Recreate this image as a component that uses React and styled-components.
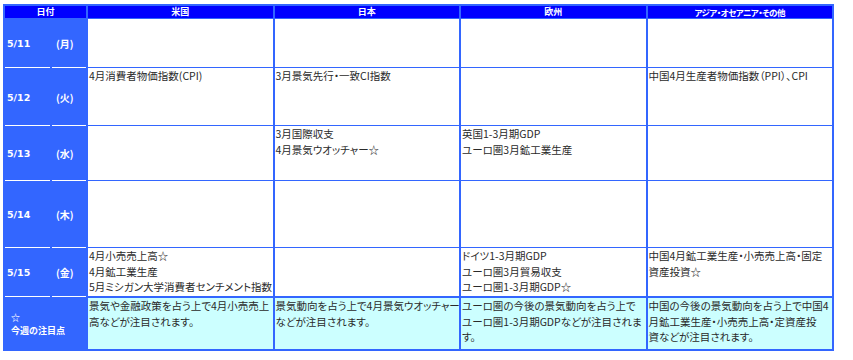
import React from "react";
import styled, { createGlobalStyle } from "styled-components";

const GlobalStyle = createGlobalStyle`
  body {
    margin: 0;
    background: #ffffff;
    font-family: "Noto Sans CJK JP", "Noto Sans", sans-serif;
  }
`;

const rows = [
  { date: "5/11", day: "(月)", us: [], jp: [], eu: [], asia: [] },
  {
    date: "5/12",
    day: "(火)",
    us: ["4月消費者物価指数(CPI)"],
    jp: ["3月景気先行・一致CI指数"],
    eu: [],
    asia: ["中国4月生産者物価指数（PPI）、CPI"],
  },
  {
    date: "5/13",
    day: "(水)",
    us: [],
    jp: ["3月国際収支", "4月景気ウオッチャー☆"],
    eu: ["英国1-3月期GDP", "ユーロ圏3月鉱工業生産"],
    asia: [],
  },
  { date: "5/14", day: "(木)", us: [], jp: [], eu: [], asia: [] },
  {
    date: "5/15",
    day: "(金)",
    us: ["4月小売売上高☆", "4月鉱工業生産", "5月ミシガン大学消費者センチメント指数"],
    jp: [],
    eu: ["ドイツ1-3月期GDP", "ユーロ圏3月貿易収支", "ユーロ圏1-3月期GDP☆"],
    asia: ["中国4月鉱工業生産・小売売上高・固定", "資産投資☆"],
  },
];

const notes = {
  us: ["景気や金融政策を占う上で4月小売売上", "高などが注目されます。"],
  jp: ["景気動向を占う上で4月景気ウオッチャー", "などが注目されます。"],
  eu: ["ユーロ圏の今後の景気動向を占う上で", "ユーロ圏1-3月期GDPなどが注目されま", "す。"],
  asia: ["中国の今後の景気動向を占う上で中国4", "月鉱工業生産・小売売上高・定資産投", "資などが注目されます。"],
};

// one block per line, so the breaks follow the original page
const Lines = ({ items }) =>
  items.map((t, i) => <Line key={i}>{t}</Line>);

const App = () => {
  return (
    <Page>
      <GlobalStyle />
      <Table>
        <HeadCell $span={2}>日付</HeadCell>
        <HeadCell>米国</HeadCell>
        <HeadCell>日本</HeadCell>
        <HeadCell>欧州</HeadCell>
        <HeadCell $narrow>アジア・オセアニア・その他</HeadCell>

        {rows.map((r) => (
          <React.Fragment key={r.date}>
            <DateCell>{r.date}</DateCell>
            <DayCell>{r.day}</DayCell>
            <DataCell><Lines items={r.us} /></DataCell>
            <DataCell><Lines items={r.jp} /></DataCell>
            <DataCell><Lines items={r.eu} /></DataCell>
            <DataCell><Lines items={r.asia} /></DataCell>
          </React.Fragment>
        ))}

        <NoteLabel>
          <span>☆</span>
          <span>今週の注目点</span>
        </NoteLabel>
        <DataCell $note><Lines items={notes.us} /></DataCell>
        <DataCell $note><Lines items={notes.jp} /></DataCell>
        <DataCell $note><Lines items={notes.eu} /></DataCell>
        <DataCell $note><Lines items={notes.asia} /></DataCell>
      </Table>
    </Page>
  );
};

const Page = styled.div`
  padding: 4px 0 0 3px;
`;

const Table = styled.div`
  display: grid;
  width: 831px;
  box-sizing: border-box;
  grid-template-columns: 45px 34px repeat(4, 1fr);
  grid-template-rows: 12px 47px 56px 53px 65px 47px 51px;
  gap: 2px;
  padding: 2px;
  background: #3366ff;
`;

const HeadCell = styled.div`
  grid-column: span ${(p) => p.$span || 1};
  background: #0000ff;
  color: #ffffff;
  font-weight: bold;
  font-size: 9px;
  line-height: 12px;
  text-align: center;
  white-space: nowrap;
  ${(p) => p.$narrow && `font-feature-settings: "palt"; letter-spacing: -0.5px; font-size: 8.5px;`}
`;

const DateCell = styled.div`
  display: flex;
  align-items: center;
  padding-left: 2px;
  background: #3366ff;
  box-shadow: 0 1px 0 #ffffff;
  color: #ffffff;
  font-family: "DejaVu Sans", sans-serif;
  font-weight: bold;
  font-size: 9.5px;
`;

const DayCell = styled(DateCell)`
  padding-left: 4px;
  font-family: "Noto Sans CJK JP", sans-serif;
  font-size: 10px;
`;

const NoteLabel = styled.div`
  grid-column: span 2;
  display: flex;
  flex-direction: column;
  justify-content: center;
  padding-left: 6px;
  background: #3366ff;
  color: #ffffff;
  font-weight: bold;
  font-size: 9px;
  line-height: 13px;
`;

const DataCell = styled.div`
  background: ${(p) => (p.$note ? "#ccffff" : "#ffffff")};
  color: #2a2a2a;
  font-size: 10.5px;
  line-height: 15.5px;
  padding: 0 0 0 1px;
  margin-top: ${(p) => (p.$note ? "0" : "-1px")};
  font-feature-settings: "palt";
  overflow: hidden;
`;

const Line = styled.div`
  white-space: nowrap;
`;

export default App;
